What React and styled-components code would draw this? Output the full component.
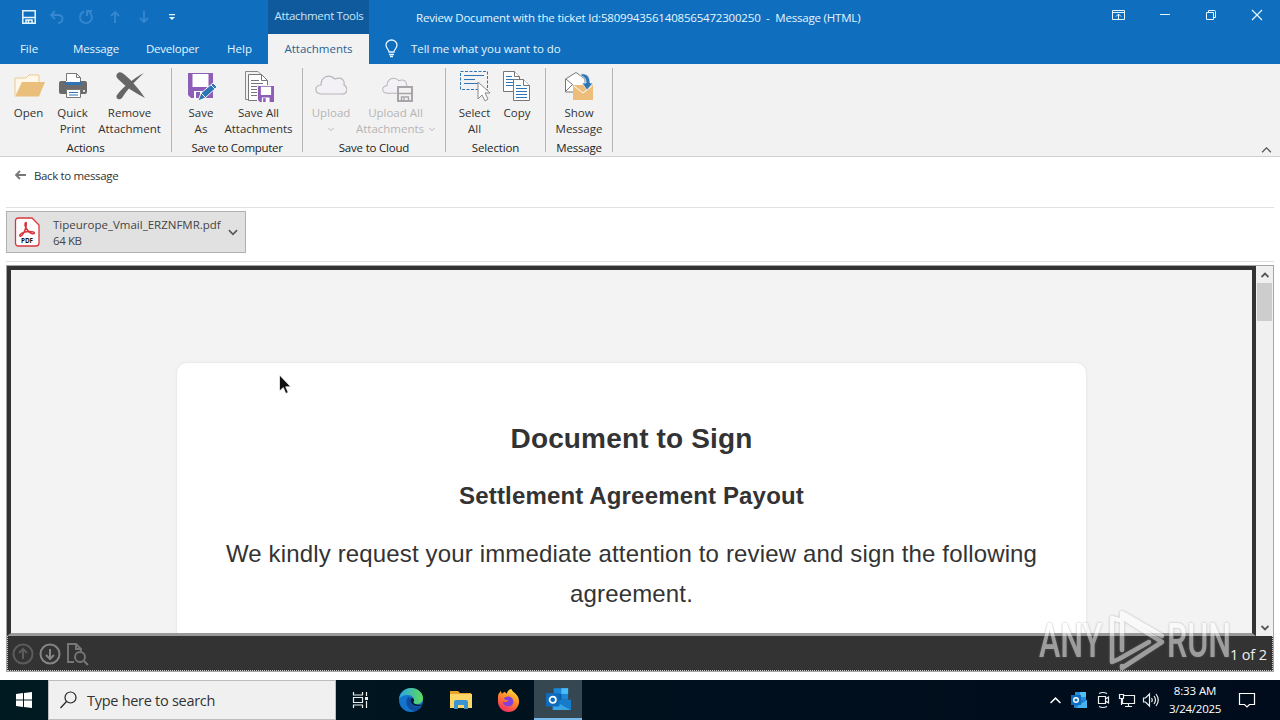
import React from 'react';
import styled, { createGlobalStyle } from 'styled-components';

const GlobalStyle = createGlobalStyle`
  * { box-sizing: border-box; }
  body {
    margin: 0;
    overflow: hidden;
    background: white;
    font-family: "Open Sans", "Noto Sans", sans-serif;
    font-size: 11.5px;
    color: #333;
  }
  svg { display: block; flex-shrink: 0; }
`

const Screen = styled.div`
  position: relative;
  width: 1280px;
  height: 720px;
  display: flex;
  flex-direction: column;
  overflow: hidden;
`

const Text = styled.span`
  white-space: pre;
  font-size: ${(props) => props.$size || 11.5}px;
  letter-spacing: ${(props) => props.$ls || 0}px;
`

/* title bar and tabs */
const TitleBar = styled.div`
  display: flex;
  height: 34px;
  background: #106ebe;
  color: #e6f6ff;
`

const QuickAccess = styled.div`
  display: flex;
  align-items: center;
  gap: 13px;
  width: 268px;
  padding-left: 22px;
`

const ContextTab = styled.div`
  width: 101px;
  padding: 8px 0 0 1px;
  text-align: center;
  background: #0f5a9c;
  line-height: 16px;
  color: #c5e5fa;
`

const WindowTitle = styled.div`
  flex: 1;
  padding: 10px 0 0 47px;
  line-height: 16px;
`

const WindowButtons = styled.div`
  display: flex;
  padding-top: 7px;
  gap: 30px;
  margin-right: 15px;
`

const TabBar = styled.div`
  display: flex;
  height: 30px;
  background: #106ebe;
  color: #e6f6ff;
`

const Tab = styled.div`
  width: ${(props) => props.$w}px;
  padding-top: 7px;
  text-align: center;
  line-height: 16px;
  background: ${(props) => (props.$active ? '#f2f2f2' : 'transparent')};
  color: ${(props) => (props.$active ? '#2b6295' : 'inherit')};
`

const TellMe = styled.div`
  display: flex;
  padding: 5px 0 0 16px;
  gap: 13px;
  line-height: 20px;
`

/* ribbon */
const Ribbon = styled.div`
  display: flex;
  height: 93px;
  background: #f2f2f2;
  border-bottom: 1px solid #cfcfcf;
`

const Group = styled.div`
  display: flex;
  flex-direction: column;
  width: ${(props) => props.$w}px;
  height: 84px;
  margin-top: 4px;
  border-right: 1px solid #b5b5b5;
`

const GroupButtons = styled.div`
  display: flex;
  justify-content: center;
  height: 72px;
`

const GroupName = styled.div`
  height: 12px;
  line-height: 16px;
  text-align: center;
  color: #1c1c1c;
`

const RibbonButton = styled.div`
  display: flex;
  flex-direction: column;
  align-items: center;
  width: ${(props) => props.$w}px;
  padding-top: 2px;
  line-height: 16px;
  color: ${(props) => (props.$off ? '#b5b5b5' : '#333')};

  > svg { margin-bottom: 3px; }
`

const Line = styled.div`
  display: flex;
  align-items: center;
  justify-content: center;
  gap: 5px;
  height: 16px;
`

const Collapse = styled.div`
  display: flex;
  flex: 1;
  align-items: flex-end;
  justify-content: flex-end;
  padding: 0 8px 3px 0;
`

/* message area */
const Body = styled.div`
  display: flex;
  flex-direction: column;
  height: 523px;
  padding: 0 6px 8px;
`

const BackRow = styled.div`
  display: flex;
  height: 51px;
  padding: 11px 0 0 8px;
  gap: 7px;
  line-height: 16px;
  border-bottom: 1px solid #e1e1e1;
`

const Attachments = styled.div`
  height: 54px;
  padding-top: 3px;
  border-bottom: 1px solid #e1e1e1;
`

const Attachment = styled.div`
  display: flex;
  align-items: center;
  width: 240px;
  height: 42px;
  padding: 0 7px;
  background: #e1e1e1;
  border: 1px solid #b0b0b0;
`

const FileInfo = styled.div`
  display: flex;
  flex-direction: column;
  flex: 1;
  padding: 2px 0 0 13px;
  line-height: 16px;
  color: #444;
`

const Viewer = styled.div`
  display: flex;
  flex-direction: column;
  height: 407px;
  margin-top: 3px;
  border: 1px solid #a5a5a5;
`

const ViewerMain = styled.div`
  display: flex;
  height: 370px;
`

const Canvas = styled.div`
  display: flex;
  flex: 1;
  justify-content: center;
  padding-top: 92px;
  background: #f3f3f3;
  border: 4px solid #333;
  border-bottom: 3px solid #999;
  overflow: hidden;
`

const Page = styled.div`
  width: 911px;
  height: 300px;
  padding-top: 56px;
  background: white;
  border: 1px solid #ebebeb;
  border-radius: 11px;
  box-shadow: 0 0 3px #ececec;
  text-align: center;
  font-family: "Liberation Sans", Arial, sans-serif;
  color: #333;
`

const Heading = styled.div`
  font-size: 28px;
  font-weight: bold;
  line-height: 40px;
  letter-spacing: 0.15px;
`

const SubHeading = styled.div`
  margin-top: 17px;
  font-size: 24px;
  font-weight: bold;
  line-height: 40px;
  letter-spacing: 0.16px;
`

const Paragraph = styled.div`
  margin-top: 18px;
  font-size: 24px;
  line-height: 40px;
  letter-spacing: 0.15px;
`

const Scrollbar = styled.div`
  display: flex;
  flex-direction: column;
  align-items: center;
  justify-content: space-between;
  width: 17px;
  padding: 6px 0 5px;
  background: #f0f0f0;
`

const Thumb = styled.div`
  width: 15px;
  height: 38px;
  margin: 5px 0 auto;
  background: #cdcdcd;
`

const ViewerBar = styled.div`
  display: flex;
  flex: 1;
  align-items: center;
  gap: 5px;
  padding: 1px 5px 0 4px;
  background: #333;
  border: 1px dotted #ccc;
  border-top: none;
  color: #eee;
`

const PageCount = styled.div`
  flex: 1;
  padding-top: 1px;
  text-align: right;
`

/* taskbar */
const Taskbar = styled.div`
  display: flex;
  height: 40px;
  background: linear-gradient(90deg, #001a22, #000f1d 60%, #000c1b);
  color: white;
`

const Start = styled.div`
  display: flex;
  align-items: center;
  width: 48px;
  padding-left: 16px;
`

const Search = styled.div`
  display: flex;
  align-items: center;
  gap: 10px;
  width: 288px;
  padding-left: 11px;
  background: #f0f0f0;
  border: 1px solid #bdbdbd;
  color: #333;
`

const TaskButton = styled.div`
  display: flex;
  align-items: center;
  justify-content: center;
  width: ${(props) => props.$w || 49}px;
  background: ${(props) => (props.$active ? '#364752' : 'transparent')};
  border-bottom: ${(props) => (props.$active ? '2px solid #76b9ed' : 'none')};
`

const Tray = styled.div`
  display: flex;
  flex: 1;
  align-items: center;
  justify-content: flex-end;
  padding-right: 24px;
`

const TrayIcon = styled.div`
  display: flex;
  justify-content: center;
  width: 24px;
`

const Clock = styled.div`
  display: flex;
  flex-direction: column;
  align-items: center;
  width: 64px;
  margin-right: 11px;
  line-height: 18px;
`

/* things lying over the window */
const Cursor = styled.div`
  position: absolute;
  left: 279px;
  top: 374px;
`

const Watermark = styled.div`
  position: absolute;
  left: 1039px;
  top: 608px;
  display: flex;
  align-items: center;
  width: 194px;
  height: 66px;
  opacity: 0.52;
  filter: drop-shadow(0 0 1px #777);
`

const MarkWord = styled.div`
  width: ${(props) => props.$w}px;
  font-family: Roboto, sans-serif;
  font-size: 48px;
  font-weight: 500;
  line-height: 66px;
  color: white;
  white-space: nowrap;
  transform: scaleX(0.67);
  transform-origin: left;
`

const Chevron = ({ w = 8, color = '#555', up, sw = 1 }) => (
  <svg width={w} height={w / 2 + 2} viewBox="0 0 8 6" fill="none" stroke={color} strokeWidth={sw}>
    <path d={up ? 'M.5 5 4 1.5 7.5 5' : 'M.5 1 4 4.5 7.5 1'} />
  </svg>
)

const Cloud = () => (
  <path d="M7 23C-1 23-1 14 6 14 6 6 14 2 20 8c7-3 10 2 9 6 5 3 3 9-2 9z" fill="#f3f1f5" stroke="#b9b5bc" strokeWidth="1.2" />
)

const OpenIcon = () => (
  <svg width="32" height="32" viewBox="0 0 32 32">
    <path d="M2 25V8h11l3-3h10v7" fill="#fff8ea" stroke="#edc98f" />
    <path d="M2 26.500 9 12h23l-6 14.500z" fill="#eabf7b" />
  </svg>
)

const PrintIcon = () => (
  <svg width="32" height="32" viewBox="0 0 32 32">
    <path d="M9.500 14V3.500h10l4 4V14" fill="#fff" stroke="#777" />
    <path d="M19.500 3.500v4h4" fill="none" stroke="#777" />
    <rect x="2" y="11" width="28" height="13" rx="2" fill="#6b6b6b" />
    <path d="M9 11h14v1H9z" fill="#fff" />
    <path d="M8 12h16v3H8z" fill="#2e75b6" />
    <path d="M9.500 19.500h14v8h-14z" fill="#fff" stroke="#777" />
    <path d="M12 22.500h9M12 25h9" stroke="#2e75b6" />
    <path d="M26 20h2v2h-2z" fill="#ddd" />
  </svg>
)

const RemoveIcon = () => (
  <svg width="32" height="32" viewBox="0 0 32 32" fill="#666">
    <path d="M3 4c2-3 5-2 8 1 7 6 14 14 20 23C21 23 12 17 4 9 2 7 2 5 3 4z" />
    <path d="M30 3C20 8 8 18 3 25c-2 3 2 6 5 3C13 20 21 11 30 3z" />
  </svg>
)

const PurpleFloppy = () => (
  <g>
    <path d="M0 0h25v25H3l-3-3z" fill="#8e5db8" />
    <path d="M4.500 1h16v13h-16zM6 18h12v7H6z" fill="#fff" />
    <path d="M8 19h4v6H8z" fill="#8e5db8" />
  </g>
)

const SaveAsIcon = () => (
  <svg width="32" height="32" viewBox="0 0 32 32">
    <g transform="translate(3 3)"><PurpleFloppy /></g>
    <path d="m13 31 3-8 12-10 4 4-12 11z" fill="#2e75b6" stroke="#f2f2f2" />
    <path d="m26 15 4 4M16 23l4 4" stroke="#e8f0f8" />
  </svg>
)

const SaveAllIcon = () => (
  <svg width="32" height="32" viewBox="0 0 32 32">
    <path d="M5 29.500H2.500v-28H15l3 3" fill="none" stroke="#888" />
    <path d="M5.500 4.500h13l6 6v20h-19z" fill="#fff" stroke="#777" />
    <path d="M18.500 4.500v6h6M8 10.500h8M8 13.500h12M8 16.500h12M8 19.500h6M8 22.500h6M8 25.500h6" fill="none" stroke="#777" />
    <path d="M14 15h18v17H14z" fill="#f2f2f2" />
    <g transform="translate(15 16) scale(.64)"><PurpleFloppy /></g>
  </svg>
)

const UploadIcon = () => (
  <svg width="32" height="32" viewBox="0 0 32 32"><g transform="translate(0 1)"><Cloud /></g></svg>
)

const UploadAllIcon = () => (
  <svg width="36" height="32" viewBox="0 0 36 32">
    <g transform="translate(4 4) scale(.84)"><Cloud /></g>
    <path d="M20 17h14v14H20z" fill="#f2f2f2" stroke="#a8a4a8" strokeWidth="2" />
    <path d="M20 23.500h14M23.500 31v-4h7v4M26 28v3" fill="none" stroke="#a8a4a8" strokeWidth="1.400" />
  </svg>
)

const SelectIcon = () => (
  <svg width="32" height="32" viewBox="0 0 32 32" fill="none">
    <rect x="1.500" y="1.500" width="27" height="18" stroke="#2e75b6" strokeDasharray="3 1.500" />
    <path d="M5 5.500h20M5 9.500h11M5 13.500h15" stroke="#2e75b6" />
    <path d="M19 12v17l4-4 3 6 3-2-3-6h5z" fill="#fff" stroke="#888" />
  </svg>
)

const CopyIcon = () => (
  <svg width="32" height="32" viewBox="0 0 32 32" fill="#fff" stroke="#777">
    <path d="M2.500 1.500h11l5 5v15h-16z" />
    <path d="M13.500 1.500v5h5" />
    <path d="M5 6.500h6M5 9.500h11M5 12.500h11M5 15.500h11" stroke="#2e75b6" />
    <path d="M12.500 9.500h10l6 6v15h-16z" />
    <path d="M22.500 9.500v6h6" />
    <path d="M15 15.500h5M15 18.500h11M15 21.500h11M15 24.500h11M15 27.500h11" stroke="#2e75b6" />
  </svg>
)

const ShowIcon = () => (
  <svg width="32" height="32" viewBox="0 0 32 32">
    <path d="M2.500 22V9L13 2.500 22 9v13z" fill="#fff" stroke="#777" />
    <path d="m3 9 7 6M3 21l6-6" fill="none" stroke="#777" />
    <path d="M10 15h20v15H10z" fill="#edbe79" />
    <path d="m11 16 9 7 9-7" fill="none" stroke="#fff" />
    <path d="M18 4c6-1 9 3 9 9h3l-6 7-5-7h4c0-4-1-6-5-7z" fill="#2e75b6" stroke="#f2f2f2" strokeWidth=".7" />
  </svg>
)

const PdfIcon = () => (
  <svg width="26" height="30" viewBox="0 0 26 30">
    <path d="M4.500 1h13.500l7 7v18q0 3-3 3H4.500q-3 0-3-3V4q0-3 3-3z" fill="#fff" stroke="#d9363e" strokeWidth="1.300" />
    <path d="M12 5.500c-2 1-1 4 1 7s5 4.500 7 4c2-2-5-2.500-9-1.500s-6 3-5 4c2 1 5-5 6-9 0-2 1-4 0-4.500z" fill="none" stroke="#d9363e" strokeWidth="1.500" />
    <text x="13" y="25.500" textAnchor="middle" fontSize="6.300" fontWeight="700" fontFamily="Open Sans" fill="#111">PDF</text>
  </svg>
)

const EdgeIcon = () => (
  <svg width="26" height="26" viewBox="0 0 26 26">
    <defs>
      <linearGradient id="edgeTop"><stop stopColor="#2aa3e8" /><stop offset="1" stopColor="#5fdc5b" /></linearGradient>
    </defs>
    <circle cx="13" cy="13" r="12" fill="#1474cc" />
    <path d="M1 12C2 5 7 1 13 1c7 0 12 5 12 10 0 4-3 6-6 6-4 0-5-2-4-3 2-3-1-6-5-6-4 0-8 2-9 4z" fill="url(#edgeTop)" />
    <path d="M10 10c-4 6 0 14 8 14 2-1 5-3 6-5-6 2-11 0-11-5 0-2 1-3 1-3z" fill="#0f4c9e" />
    <path d="M14 11c-1.500 1-1.500 3-.5 5 2.500 4 8.500 4 11.500 1.500-3 .5-5 .5-8-.5-2-1-2-2-1-3 .5-1-.5-3-2-3z" fill="#02182a" />
  </svg>
)

const FolderIcon = () => (
  <svg width="24" height="22" viewBox="0 0 24 22">
    <path d="M1 2h8l2 2h11v4H1z" fill="#e8a32c" />
    <path d="M1 5h22v14H1z" fill="#fcd667" />
    <path d="M5 20v-7q0-2 2-2h10q2 0 2 2v7h-4v-4H9v4z" fill="#3b94d1" />
  </svg>
)

const FirefoxIcon = () => (
  <svg width="24" height="25" viewBox="1 0 25 26">
    <defs>
      <linearGradient id="fox" x1=".8" y1="0" x2=".3" y2="1">
        <stop stopColor="#ffe640" /><stop offset=".45" stopColor="#ff8a27" /><stop offset="1" stopColor="#f52c66" />
      </linearGradient>
    </defs>
    <path d="M2 9c0-3 2-5 3-6l1 3 3-2 2 2c1-3 3-5 5-5 1 4 8 5 8 13 0 6-5 11-11 11S2 20 2 14z" fill="url(#fox)" />
    <path d="M8 11c2-3 7-3 9 0 3 5-1 9-5 8-3 0-5-3-5-5 2 1 5 1 6-1-2 0-4-1-5-2z" fill="#8440d8" />
  </svg>
)

const OutlookIcon = ({ size = 26 }) => (
  <svg width={size} height={size * 0.9} viewBox="0 0 26 23">
    <path d="M8 0h15v12H8z" fill="#1a86d8" />
    <path d="M16 0h7v6h-7z" fill="#4bbcf5" />
    <path d="M8 6h8v7H8z" fill="#0b5cab" />
    <path d="M7 12h19v11H7z" fill="#167bc9" />
    <path d="m7 12 19 11H7z" fill="#39a5e5" />
    <rect y="5" width="14" height="14" rx="1" fill="#0f6cbd" />
    <circle cx="7" cy="12" r="3.300" fill="none" stroke="#fff" strokeWidth="1.800" />
  </svg>
)

const TrayOutlookIcon = () => (
  <svg width="16" height="16" viewBox="0 0 16 16">
    <path d="M4 0h11v9H4z" fill="#1f8fe0" />
    <path d="M9 0h6v5H9z" fill="#50c0f5" />
    <path d="M3 8h13v8H3z" fill="#1a80cf" />
    <path d="m16 8-8 5-3 3h11z" fill="#45b2ee" />
    <path d="M0 3h10v10H0z" fill="#0f6cbd" />
    <circle cx="5" cy="8" r="2.300" fill="none" stroke="#fff" strokeWidth="1.400" />
  </svg>
)

function RibbonItem({ w, icon, lines, off }) {
  return (
    <RibbonButton $w={w} $off={off}>
      {icon}
      {lines.map((line, i) => (
        <Line key={i}>
          {line && <Text>{line}</Text>}
          {off && i === 1 && <Chevron w={6} color="#b0b0b0" sw={1.2} />}
        </Line>
      ))}
    </RibbonButton>
  )
}

function App() {
  return (
    <>
      <GlobalStyle />
      <Screen>
        <TitleBar>
          <QuickAccess>
            <svg width="14" height="14" viewBox="0 0 14 14" fill="none" stroke="#e6f6ff" strokeWidth="1.500"><path d="M.8.800h12.400v12.400H.8zM1 7.500h12M4 13v-3h6v3M6.500 10.500V13" /></svg>
            <svg width="16" height="16" viewBox="0 0 16 16" fill="none" stroke="#3587cf" strokeWidth="1.900"><path d="M6 2 2 6l4 4M2 6h7c6 0 6 7 0 8" /></svg>
            <svg width="16" height="16" viewBox="0 0 16 16" fill="none" stroke="#3587cf" strokeWidth="1.900"><path d="M6 2.500a6 6 0 1 0 5 .5M9 7V2h5" /></svg>
            <svg width="16" height="16" viewBox="0 0 16 16" fill="none" stroke="#3587cf" strokeWidth="1.900"><path d="M8 14V3M4 7l4-4 4 4" /></svg>
            <svg width="16" height="16" viewBox="0 0 16 16" fill="none" stroke="#3587cf" strokeWidth="1.900"><path d="M8 2v11M4 9l4 4 4-4" /></svg>
            <svg width="14" height="14" viewBox="0 0 14 14" fill="#e6f6ff"><path d="M4 4h6v1.200H4zM4 7h6l-3 3z" /></svg>
          </QuickAccess>
          <ContextTab><Text $ls={-0.34}>Attachment Tools</Text></ContextTab>
          <WindowTitle><Text $ls={-0.19}>Review Document with the ticket Id:5809943561408565472300250  -  Message (HTML)</Text></WindowTitle>
          <WindowButtons>
            <svg width="16" height="16" viewBox="0 0 16 16" fill="none" stroke="#e6f6ff"><path d="M1.500 3.500h12v9h-12zM1.500 5.500h12M7.500 12V7M5 9.500 7.500 7 10 9.500" /></svg>
            <svg width="16" height="16" viewBox="0 0 16 16" stroke="#e6f6ff"><path d="M3 7.500h10" /></svg>
            <svg width="16" height="16" viewBox="0 0 16 16" fill="none" stroke="#e6f6ff"><path d="M3.500 5.500h7v7h-7zM5.500 5V3.500h6q1 0 1 1v6H11" /></svg>
            <svg width="16" height="16" viewBox="0 0 16 16" stroke="#e6f6ff" strokeWidth="1.200"><path d="m3 3 10 10M13 3 3 13" /></svg>
          </WindowButtons>
        </TitleBar>
        <TabBar>
          <Tab $w={58}><Text>File</Text></Tab>
          <Tab $w={76}><Text $ls={-0.1}>Message</Text></Tab>
          <Tab $w={77}><Text $ls={-0.2}>Developer</Text></Tab>
          <Tab $w={57}><Text>Help</Text></Tab>
          <Tab $w={101} $active><Text>Attachments</Text></Tab>
          <TellMe>
            <svg width="13" height="20" viewBox="0 0 13 20" fill="none" stroke="#e6f6ff" strokeWidth="1.300"><path d="M4 13c0-3-3-3-3-7a5.500 5 0 0 1 11 0c0 4-3 4-3 7zM4 15.500h5M5 17.500h3" /></svg>
            <Text $ls={-0.06}>Tell me what you want to do</Text>
          </TellMe>
        </TabBar>

        <Ribbon>
          <Group $w={172}>
            <GroupButtons>
              <RibbonItem w={45} icon={<OpenIcon />} lines={['Open']} />
              <RibbonItem w={43} icon={<PrintIcon />} lines={['Quick', 'Print']} />
              <RibbonItem w={71} icon={<RemoveIcon />} lines={['Remove', 'Attachment']} />
            </GroupButtons>
            <GroupName><Text $ls={-0.2}>Actions</Text></GroupName>
          </Group>
          <Group $w={131}>
            <GroupButtons>
              <RibbonItem w={43} icon={<SaveAsIcon />} lines={['Save', 'As']} />
              <RibbonItem w={72} icon={<SaveAllIcon />} lines={['Save All', 'Attachments']} />
            </GroupButtons>
            <GroupName><Text $ls={-0.3}>Save to Computer</Text></GroupName>
          </Group>
          <Group $w={143}>
            <GroupButtons>
              <RibbonItem w={43} icon={<UploadIcon />} lines={['Upload', '']} off />
              <RibbonItem w={86} icon={<UploadAllIcon />} lines={['Upload All', 'Attachments']} off />
            </GroupButtons>
            <GroupName><Text $ls={-0.2}>Save to Cloud</Text></GroupName>
          </Group>
          <Group $w={100}>
            <GroupButtons>
              <RibbonItem w={43} icon={<SelectIcon />} lines={['Select', 'All']} />
              <RibbonItem w={42} icon={<CopyIcon />} lines={['Copy']} />
            </GroupButtons>
            <GroupName><Text $ls={-0.15}>Selection</Text></GroupName>
          </Group>
          <Group $w={67}>
            <GroupButtons>
              <RibbonItem w={54} icon={<ShowIcon />} lines={['Show', 'Message']} />
            </GroupButtons>
            <GroupName><Text $ls={-0.2}>Message</Text></GroupName>
          </Group>
          <Collapse><Chevron w={11} up /></Collapse>
        </Ribbon>

        <Body>
          <BackRow>
            <svg width="13" height="14" viewBox="0 0 13 14" fill="none" stroke="#777" strokeWidth="1.800"><path d="M12 7H2M6 3 2 7l4 4" /></svg>
            <Text $ls={-0.35}>Back to message</Text>
          </BackRow>
          <Attachments>
            <Attachment>
              <PdfIcon />
              <FileInfo>
                <Text>Tipeurope_Vmail_ERZNFMR.pdf</Text>
                <Text $ls={-0.4}>64 KB</Text>
              </FileInfo>
              <Chevron w={10} sw={1.4} />
            </Attachment>
          </Attachments>
          <Viewer>
            <ViewerMain>
              <Canvas>
                <Page>
                  <Heading>Document to Sign</Heading>
                  <SubHeading>Settlement Agreement Payout</SubHeading>
                  <Paragraph>We kindly request your immediate attention to review and sign the following<br />agreement.</Paragraph>
                </Page>
              </Canvas>
              <Scrollbar>
                <Chevron w={8} up sw={1.8} />
                <Thumb />
                <Chevron w={8} sw={1.8} />
              </Scrollbar>
            </ViewerMain>
            <ViewerBar>
              <svg width="22" height="22" viewBox="0 0 22 22" fill="none" stroke="#5c5c5c" strokeWidth="2"><circle cx="11" cy="11" r="9.500" /><path d="M11 16V6M7 10l4-4 4 4" /></svg>
              <svg width="22" height="22" viewBox="0 0 22 22" fill="none" stroke="#858585" strokeWidth="2"><circle cx="11" cy="11" r="9.500" /><path d="M11 6v10M7 12l4 4 4-4" /></svg>
              <svg width="23" height="24" viewBox="0 0 23 24" fill="none" stroke="#777" strokeWidth="1.900"><path d="M8 20H2V2h8l5 5v2M10 2v5h5" /><circle cx="14" cy="15" r="5" /><path d="m18 19 4 4" /></svg>
              <PageCount><Text $size={14.5} $ls={-0.1}>1 of 2</Text></PageCount>
            </ViewerBar>
          </Viewer>
        </Body>

        <Taskbar>
          <Start>
            <svg width="16" height="16" viewBox="0 0 16 16" fill="white"><path d="m0 2 7-1v6.500H0zM8 .9 16 0v7.500H8zM0 8.500h7V15l-7-1zM8 8.500h8V16l-8-1z" /></svg>
          </Start>
          <Search>
            <svg width="17" height="18" viewBox="0 0 17 18" fill="none" stroke="#222" strokeWidth="1.200"><circle cx="10.500" cy="6.500" r="5.500" /><path d="M6.500 10.500.5 17" /></svg>
            <Text $size={14.5} $ls={-0.28}>Type here to search</Text>
          </Search>
          <TaskButton $w={48}>
            <svg width="18" height="18" viewBox="0 0 18 18" fill="none" stroke="#eee" strokeWidth="1.200"><path d="M2.500 1v3h9V1M2.500 6.500h9v5h-9zM2.500 17v-3h9v3M15.500 1v4M15.500 10v7" /><path d="M14 6h3v3h-3z" fill="#eee" stroke="none" /></svg>
          </TaskButton>
          <TaskButton $w={53}><EdgeIcon /></TaskButton>
          <TaskButton $w={47}><FolderIcon /></TaskButton>
          <TaskButton $w={50}><FirefoxIcon /></TaskButton>
          <TaskButton $w={48} $active><OutlookIcon size={25} /></TaskButton>
          <Tray>
            <TrayIcon><Chevron w={13} up color="#fff" /></TrayIcon>
            <TrayIcon><TrayOutlookIcon /></TrayIcon>
            <TrayIcon><svg width="16" height="18" viewBox="0 0 16 18" fill="none" stroke="#eee" strokeWidth="1.200"><path d="M3.500 5.500h7v7h-7zM10.500 8l3-2v6l-3-2M4 2.500q4-2 8 0M4 15.500q4 2 8 0" /></svg></TrayIcon>
            <TrayIcon><svg width="18" height="16" viewBox="0 0 18 16" fill="none" stroke="#eee" strokeWidth="1.200"><path d="M6 3.500h10.500v8H4.500V7M10.500 12v2.500M7 14.500h7M1.500 2.500h4v4h-4zM3.500 7v6" /></svg></TrayIcon>
            <TrayIcon><svg width="18" height="16" viewBox="0 0 18 16" fill="none" stroke="#eee" strokeWidth="1.200"><path d="M1.500 6h2l4-4v12l-4-4h-2zM9.500 6q1.500 2 0 4M12 4q3 4 0 8M14 2q4.500 6 0 12" /></svg></TrayIcon>
            <Clock>
              <Text $ls={-0.1}>8:33 AM</Text>
              <Text $ls={-0.25}>3/24/2025</Text>
            </Clock>
            <svg width="18" height="18" viewBox="0 0 18 18" fill="none" stroke="#fff" strokeWidth="1.200"><path d="M1.500 2.500h15v11h-5L9 16l-2.500-2.500h-5z" /></svg>
          </Tray>
        </Taskbar>

        <Cursor>
          <svg width="13" height="21" viewBox="0 0 13 21"><path d="M.5 1v16l3.800-3.400 2.500 5.800 2.400-1-2.500-5.600h5z" fill="#111" stroke="#fff" strokeWidth=".7" /></svg>
        </Cursor>
        <Watermark>
          <MarkWord $w={68}>ANY</MarkWord>
          <svg width="60" height="66" viewBox="0 0 60 66" fill="none" stroke="white" strokeWidth="4.500" strokeLinejoin="round" strokeLinecap="round">
            <path d="M15 42V5l40 23" />
            <path d="M12 12 5 10v44l7-3 30-17M15 58v2l40-26-40-25" />
          </svg>
          <MarkWord $w={62}>RUN</MarkWord>
        </Watermark>
      </Screen>
    </>
  )
}

export default App;
